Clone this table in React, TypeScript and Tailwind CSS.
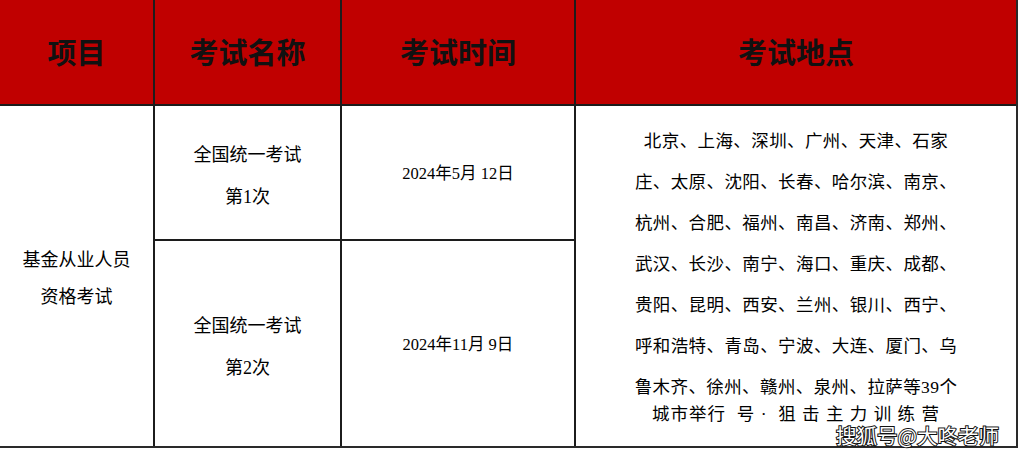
const serif = "font-['Liberation_Serif','Noto_Sans_CJK_SC',serif]";

const places = [
  "北京、上海、深圳、广州、天津、石家",
  "庄、太原、沈阳、长春、哈尔滨、南京、",
  "杭州、合肥、福州、南昌、济南、郑州、",
  "武汉、长沙、南宁、海口、重庆、成都、",
  "贵阳、昆明、西安、兰州、银川、西宁、",
  "呼和浩特、青岛、宁波、大连、厦门、乌",
  "鲁木齐、徐州、赣州、泉州、拉萨等39个",
];

export default function App() {
  return (
    <div className={`relative h-[456px] w-[1024px] overflow-hidden bg-white ${serif}`}>
      <div className="grid w-[1018px] grid-cols-[153px_185px_232px_440px] grid-rows-[104px_133px_205px] gap-[2px] border-r-2 border-b-2 border-[#2a2a2a] bg-[#1c1c1c]">
        {/* header */}
        {["项目", "考试名称", "考试时间", "考试地点"].map((h) => (
          <div key={h} className="flex items-center justify-center bg-[#c00000] pt-[6px] text-[29px] font-bold text-[#111]">
            {h}
          </div>
        ))}

        {/* body */}
        <div className="row-span-2 flex flex-col items-center justify-center bg-white pt-[5px] text-[18px] leading-[37px] text-black">
          <div>基金从业人员</div>
          <div>资格考试</div>
        </div>
        <div className="flex flex-col items-center justify-center bg-white pt-[6px] text-[18px] leading-[42px] text-black">
          <div>全国统一考试</div>
          <div>第1次</div>
        </div>
        <div className="flex items-center justify-center bg-white pt-[4px] text-[16.5px] text-black">
          2024年5月 12日
        </div>
        <div className="row-span-2 flex flex-col items-center bg-white pt-[15px] text-[17.5px] leading-[41px] tracking-[0.4px] text-black">
          {places.map((p) => (
            <div key={p}>{p}</div>
          ))}
          <div className="-mt-[4px] whitespace-pre leading-[20px] tracking-[1px]">城市举行  号 ·  狙 击 主 力 训 练 营</div>
        </div>
        <div className="flex flex-col items-center justify-center bg-white pt-[6px] text-[18px] leading-[42px] text-black">
          <div>全国统一考试</div>
          <div>第2次</div>
        </div>
        <div className="flex items-center justify-center bg-white pt-[4px] text-[16.5px] text-black">
          2024年11月 9日
        </div>
      </div>

      {/* watermark */}
      <div className="absolute left-[836px] top-[425px] font-['Noto_Sans_CJK_SC',sans-serif] text-[20.5px] leading-none text-white [-webkit-text-stroke:2px_#111] [paint-order:stroke_fill]">
        搜狐号@大咚老师
      </div>
    </div>
  );
}
